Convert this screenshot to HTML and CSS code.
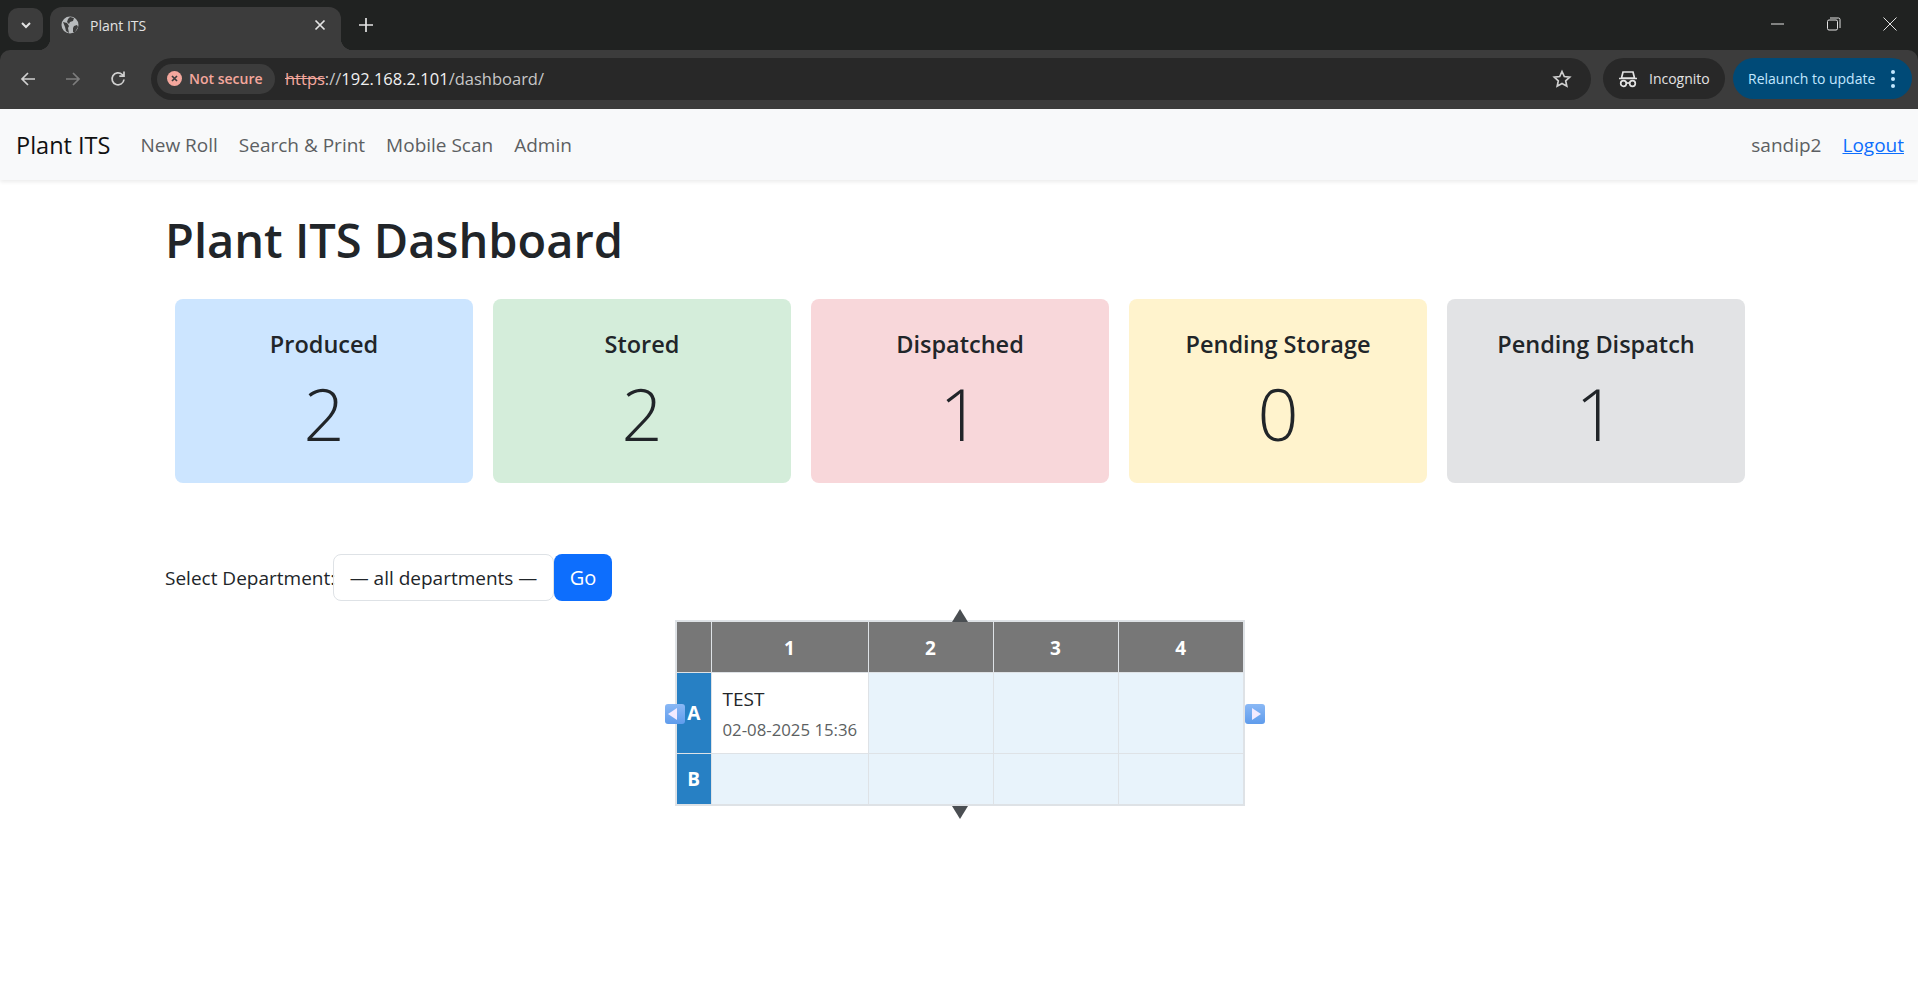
FILE: index.html
```html
<!DOCTYPE html>
<html>
<head>
<meta charset="utf-8">
<title>Plant ITS</title>
<link rel="stylesheet" href="styles.css">
</head>
<body>
<div class="frame">
<div class="tabstrip">
    <div class="tabsearch">
        <svg width="14" height="14" viewBox="0 0 14 14"><path d="M3 5l4 4 4-4" fill="none" stroke="#e3e3e3" stroke-width="2"/></svg>
    </div>
    <div class="tab">
        <svg class="favicon" width="18" height="18" viewBox="0 0 18 18">
            <circle cx="9" cy="9" r="8.5" fill="#b8bbbd"/>
            <path d="M2 6l4 1 2 3-1 2 1 5-3-2-1-4zM9 1l4 1-1 3-3 1-1 2-2-2 1-3zM13 10l3-1 1 2-3 5-2 0 0-4z" fill="#3c3c3c"/>
        </svg>
        <span class="tabtitle">Plant ITS</span>
        <svg width="12" height="12" viewBox="0 0 12 12"><path d="M1.5 1.5l9 9M10.5 1.5l-9 9" stroke="#e3e3e3" stroke-width="1.7"/></svg>
    </div>
    <svg class="newtab" width="14" height="14" viewBox="0 0 14 14"><path d="M7 0v14M0 7h14" stroke="#e3e3e3" stroke-width="1.7"/></svg>
    <div class="winctl">
        <svg width="14" height="14" viewBox="0 0 14 14"><path d="M0 7h13" stroke="#e3e3e3" stroke-width="1"/></svg>
        <svg width="14" height="14" viewBox="0 0 14 14"><rect x="0.5" y="3" width="10" height="10" rx="1.5" fill="none" stroke="#e3e3e3"/><path d="M3 1h8.5a1.5 1.5 0 0 1 1.5 1.5V11" fill="none" stroke="#e3e3e3"/></svg>
        <svg width="14" height="14" viewBox="0 0 14 14"><path d="M0.5 0.5l13 13M13.5 0.5l-13 13" stroke="#e3e3e3" stroke-width="1"/></svg>
    </div>
</div>
<div class="toolbar">
    <svg class="tool" width="18" height="18" viewBox="0 0 18 18"><path d="M16 9H3M9 3L3 9l6 6" fill="none" stroke="#d0d0d0" stroke-width="1.7"/></svg>
    <svg class="tool" width="18" height="18" viewBox="0 0 18 18"><path d="M2 9h13M9 3l6 6-6 6" fill="none" stroke="#7d7d7d" stroke-width="1.7"/></svg>
    <svg class="tool" width="18" height="18" viewBox="0 0 18 18"><path d="M15 9.500a6 6 0 1 1-1.800-5L15 6.200M15 1.500v4.700h-4.700" fill="none" stroke="#d0d0d0" stroke-width="1.700"/></svg>
    <div class="omnibox">
        <div class="chip">
            <svg width="15" height="15" viewBox="0 0 15 15"><circle cx="7.500" cy="7.500" r="7.500" fill="#f4a79d"/><path d="M5 5l5 5M10 5l-5 5" stroke="#3c3c3c" stroke-width="1.700"/></svg>
            <span>Not secure</span>
        </div>
        <div class="url"><span class="scheme">https</span><span class="sep">://</span><span class="host">192.168.2.101</span><span class="sep">/dashboard/</span></div>
        <svg class="star" width="20" height="20" viewBox="0 0 20 20"><path d="M10 2.500l2.300 5 5.400.6-4 3.700 1.100 5.400L10 14.500l-4.800 2.700 1.100-5.400-4-3.700 5.400-.6z" fill="none" stroke="#d0d0d0" stroke-width="1.700"/></svg>
    </div>
    <div class="incognito">
        <svg width="20" height="18" viewBox="0 0 20 18"><path d="M5 2h10l1.500 6h-13zM1 8.500h18" fill="none" stroke="#e3e3e3" stroke-width="1.700"/><circle cx="5.500" cy="13.500" r="2.800" fill="none" stroke="#e3e3e3" stroke-width="1.700"/><circle cx="14.500" cy="13.500" r="2.800" fill="none" stroke="#e3e3e3" stroke-width="1.700"/><path d="M8 13h4" stroke="#e3e3e3" stroke-width="1.700"/></svg>
        <span>Incognito</span>
    </div>
    <div class="relaunch">
        <span>Relaunch to update</span>
        <svg width="4" height="18" viewBox="0 0 4 18"><circle cx="2" cy="2" r="2" fill="#c2e7ff"/><circle cx="2" cy="9" r="2" fill="#c2e7ff"/><circle cx="2" cy="16" r="2" fill="#c2e7ff"/></svg>
    </div>
</div>
</div>

<nav class="navbar">
    <a class="brand">Plant ITS</a>
    <a class="navlink">New Roll</a>
    <a class="navlink">Search &amp; Print</a>
    <a class="navlink">Mobile Scan</a>
    <a class="navlink">Admin</a>
    <span class="user">sandip2</span>
    <a class="logout">Logout</a>
</nav>

<div class="main">
    <h1>Plant ITS Dashboard</h1>
    <div class="cards">
        <div class="card blue"><h5>Produced</h5><p>2</p></div>
        <div class="card green"><h5>Stored</h5><p>2</p></div>
        <div class="card red"><h5>Dispatched</h5><p>1</p></div>
        <div class="card yellow"><h5>Pending Storage</h5><p>0</p></div>
        <div class="card gray"><h5>Pending Dispatch</h5><p>1</p></div>
    </div>
    <form class="deptform">
        <label>Select Department:</label>
        <div class="select">— all departments —</div>
        <div class="gobtn">Go</div>
    </form>
    <div class="gridwrap">
        <svg class="arrow uptri" width="16" height="13" viewBox="0 0 16 13"><path d="M8 0l8 13H0z" fill="#4a4e52"/></svg>
        <div class="side left"><i></i></div>
        <div class="side right"><i></i></div>
        <table class="rack">
            <tr>
                <th class="c0"></th>
                <th class="c1">1</th>
                <th class="c2">2</th>
                <th class="c3">3</th>
                <th class="c4">4</th>
            </tr>
            <tr class="rowa">
                <th class="rowhead">A</th>
                <td class="filled">
                    <div class="name">TEST</div>
                    <div class="stamp">02-08-2025 15:36</div>
                </td>
                <td></td>
                <td></td>
                <td></td>
            </tr>
            <tr class="rowb">
                <th class="rowhead">B</th>
                <td></td>
                <td></td>
                <td></td>
                <td></td>
            </tr>
        </table>
        <svg class="arrow lowtri" width="16" height="13" viewBox="0 0 16 13"><path d="M0 0h16L8 13z" fill="#4a4e52"/></svg>
    </div>
</div>
</body>
</html>
```
FILE: styles.css
```css
* {
    box-sizing: border-box;
}
body {
    margin: 0;
    background: #fff;
    color: #212529;
    font-family: "Open Sans", "Noto Sans", "Liberation Sans", sans-serif;
    font-size: 18px;
}
h1, h5, p {
    margin: 0;
    font-weight: normal;
}

/* browser frame */
.frame {
    background: #202221;
}
.tabstrip {
    height: 50px;
    display: flex;
    align-items: flex-start;
    color: #e3e3e3;
}
.tabsearch {
    width: 35px;
    height: 34px;
    margin: 8px 7px 0 8px;
    background: #3c3c3c;
    border-radius: 10px;
    display: flex;
    align-items: center;
    justify-content: center;
}
.tab {
    position: relative;
    width: 291px;
    height: 43px;
    margin-top: 7px;
    background: #3c3c3c;
    border-radius: 12px 12px 0 0;
    display: flex;
    align-items: center;
    padding: 0 15px 7px 11px;
    font-size: 14px;
}
.tab::before, .tab::after {
    content: "";
    position: absolute;
    bottom: 0;
    width: 12px;
    height: 12px;
}
.tab::before {
    left: -12px;
    background: radial-gradient(circle at 0 0, transparent 12px, #3c3c3c 12.5px);
}
.tab::after {
    right: -12px;
    background: radial-gradient(circle at 100% 0, transparent 12px, #3c3c3c 12.5px);
}
.tabtitle {
    flex: 1;
    margin-left: 11px;
}
.newtab {
    margin: 18px 0 0 18px;
}
.winctl {
    margin-left: auto;
    display: flex;
    gap: 42px;
    padding: 17px 21px 0 0;
}
.toolbar {
    height: 59px;
    background: #3c3c3c;
    display: flex;
    align-items: center;
    padding: 0 6px 2px 19px;
    border-radius: 10px 10px 0 0;
}
.tool {
    margin-right: 27px;
}
.omnibox {
    width: 1440px;
    height: 42px;
    margin-left: -3px;
    background: #282828;
    border-radius: 21px;
    display: flex;
    align-items: center;
    padding: 0 19px 0 6px;
    font-size: 16.5px;
}
.chip {
    height: 30px;
    width: 118px;
    background: #3c3c3c;
    border-radius: 15px;
    display: flex;
    align-items: center;
    gap: 7px;
    padding-left: 10px;
    color: #f4a79d;
    font-size: 14px;
    font-weight: 600;
    white-space: nowrap;
}
.url {
    margin-left: 10px;
    flex: 1;
}
.scheme {
    color: #f4a79d;
    text-decoration: line-through;
}
.sep {
    color: #c7c7c7;
}
.host {
    color: #f1f1f1;
}
.incognito {
    width: 122px;
    height: 41px;
    margin-left: 12px;
    background: #282828;
    border-radius: 21px;
    display: flex;
    align-items: center;
    gap: 11px;
    padding-left: 15px;
    color: #e3e3e3;
    font-size: 14px;
}
.relaunch {
    width: 179px;
    height: 41px;
    margin-left: 8px;
    background: #004a77;
    border-radius: 21px;
    display: flex;
    align-items: center;
    justify-content: space-between;
    padding: 0 17px 0 15px;
    color: #c2e7ff;
    font-size: 14px;
    white-space: nowrap;
}

/* page navbar */
.navbar {
    height: 71px;
    background: #f8f9fa;
    box-shadow: 0 2px 4px rgba(0, 0, 0, .08);
    display: flex;
    align-items: center;
    padding: 0 14px 0 16px;
}
.brand {
    font-size: 23.5px;
    color: #111;
    margin-right: 30px;
}
.navlink {
    color: #5c5f62;
    font-size: 19px;
    margin-right: 21px;
}
.user {
    margin-left: auto;
    color: #5c5f62;
    font-size: 19px;
}
.logout {
    margin-left: 21px;
    color: #0d6efd;
    font-size: 19px;
    text-decoration: underline;
}

/* dashboard */
.main {
    padding: 0 163px 0 165px;
}
h1 {
    font-size: 47px;
    font-weight: 600;
    line-height: 60px;
    padding-top: 30px;
    height: 119px;
}
.cards {
    display: flex;
    gap: 20px;
    margin-left: 10px;
}
.card {
    width: 298px;
    height: 184px;
    border-radius: 8px;
    text-align: center;
    padding-top: 30px;
}
.card h5 {
    font-size: 23.5px;
    font-weight: 600;
    line-height: 30px;
}
.card p {
    font-size: 72px;
    font-weight: 300;
    line-height: 84px;
    margin-top: 12px;
}
.blue { background: #cce5ff; }
.green { background: #d4edda; }
.red { background: #f8d7da; }
.yellow { background: #fff3cd; }
.gray { background: #e2e3e5; }

.deptform {
    display: flex;
    align-items: center;
    margin-top: 71px;
    height: 47px;
    font-size: 19px;
}
.deptform label {
    width: 168px;
    white-space: nowrap;
}
.select {
    width: 221px;
    height: 47px;
    border: 1px solid #dee2e6;
    border-radius: 8px;
    display: flex;
    align-items: center;
    justify-content: center;
    white-space: nowrap;
}
.gobtn {
    width: 58px;
    height: 47px;
    background: #0d6efd;
    border-radius: 8px;
    color: #fff;
    font-size: 20px;
    display: flex;
    align-items: center;
    justify-content: center;
}

/* rack grid */
.gridwrap {
    position: relative;
    width: 570px;
    height: 210px;
    margin: 19px auto 0;
}
.rack {
    width: 570px;
    height: 186px;
    table-layout: fixed;
    border-collapse: collapse;
    border: 2px solid #dee2e6;
}
.rack th, .rack td {
    padding: 0;
}
.rack tr:first-child th {
    background: #777;
    color: #fff;
    font-size: 19px;
    font-weight: 700;
    height: 51px;
    padding-top: 2px;
    border: 1px solid #dee2e6;
}
.c0 { width: 35px; }
.c1 { width: 157px; }
.c2, .c3 { width: 125px; }
.c4 { width: 126px; }
.rowa { height: 81px; }
.rowb { height: 52px; }
.rack .rowhead {
    background: #2780c4;
    color: #fff;
    font-size: 19px;
    font-weight: 700;
    border: 1px solid #dee2e6;
    border-left: 0;
}
.rack td {
    background: #e8f3fb;
    border: 1px solid #dee2e6;
}
.rack .filled {
    background: #fff;
    padding: 3px 0 0 11px;
    white-space: nowrap;
}
.name {
    font-size: 19px;
    color: #212529;
    line-height: 31px;
}
.stamp {
    font-size: 16.800px;
    color: #5c5f62;
    line-height: 30px;
}
.arrow {
    position: absolute;
    left: 277px;
}
.uptri {
    top: -11px;
}
.lowtri {
    top: 186px;
}
.side {
    position: absolute;
    top: 84px;
    width: 20px;
    height: 20px;
    background: linear-gradient(#8ab8f5, #5f9cec);
    border-radius: 3px;
}
.side i {
    position: absolute;
    top: 4px;
    width: 0;
    height: 0;
    border-top: 6px solid transparent;
    border-bottom: 6px solid transparent;
}
.left {
    left: -10px;
}
.left i {
    left: 3px;
    border-right: 9px solid #f3eaff;
}
.right {
    right: -20px;
}
.right i {
    left: 7px;
    border-left: 9px solid #f3eaff;
}
```
